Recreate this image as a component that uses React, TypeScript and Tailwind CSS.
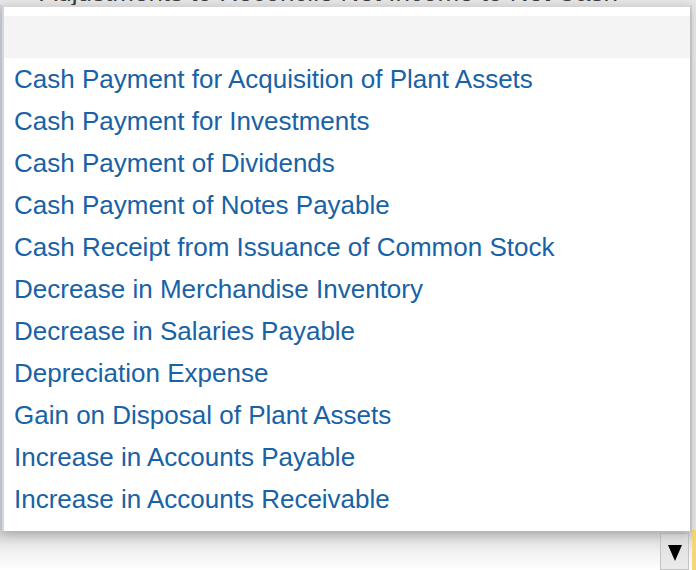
const options = [
  "Cash Payment for Acquisition of Plant Assets",
  "Cash Payment for Investments",
  "Cash Payment of Dividends",
  "Cash Payment of Notes Payable",
  "Cash Receipt from Issuance of Common Stock",
  "Decrease in Merchandise Inventory",
  "Decrease in Salaries Payable",
  "Depreciation Expense",
  "Gain on Disposal of Plant Assets",
  "Increase in Accounts Payable",
  "Increase in Accounts Receivable",
];

export default function App() {
  return (
    <div
      className="relative flex h-[570px] w-[696px] flex-col overflow-hidden bg-white"
      style={{ fontFamily: '"Liberation Sans", Arial, sans-serif' }}
    >
      {/* page behind the open list */}
      <div className="flex h-[530px] flex-col bg-[#e6e6e6]">
        <div className="-mt-[22px] pl-[40px] text-[26px] leading-[28px] text-[#3c3c3c]">
          Adjustments to Reconcile Net Income to Net Cash
        </div>
      </div>
      <div className="flex h-[40px] justify-end bg-gradient-to-b from-[#cfcfcf] via-[#efefef] to-white pt-[3px]">
        <div className="mr-[3px] flex w-[29px] items-center justify-center border border-[#c4c4c4] bg-gradient-to-b from-[#dedede] to-[#ebebeb] pt-[2px]">
          <svg width="14" height="16" viewBox="0 0 14 16">
            <polygon points="0,0 14,0 7,16" fill="#000" />
          </svg>
        </div>
        <div className="-mt-[3px] w-[4px] bg-[#f3d77a]" />
      </div>

      {/* open dropdown list */}
      <div className="absolute right-[4px] top-[5px] h-[527px] w-[692px] border-r-2 border-r-[#d2d2d2] bg-[#cdd3df]" />
      <div className="absolute left-[2px] top-[5px] flex w-[688px] flex-col border-t-2 border-l-2 border-[#d6d6d6] bg-white pt-[9px] pb-[11px] shadow-[0_3px_10px_rgba(0,0,0,0.2)]">
        <div className="h-[42px] bg-[#f4f4f4]" />
        {options.map((label) => (
          <div key={label} className="flex h-[42px] items-center pl-[10px] text-[26px] text-[#1862a5]">
            {label}
          </div>
        ))}
      </div>
    </div>
  );
}
